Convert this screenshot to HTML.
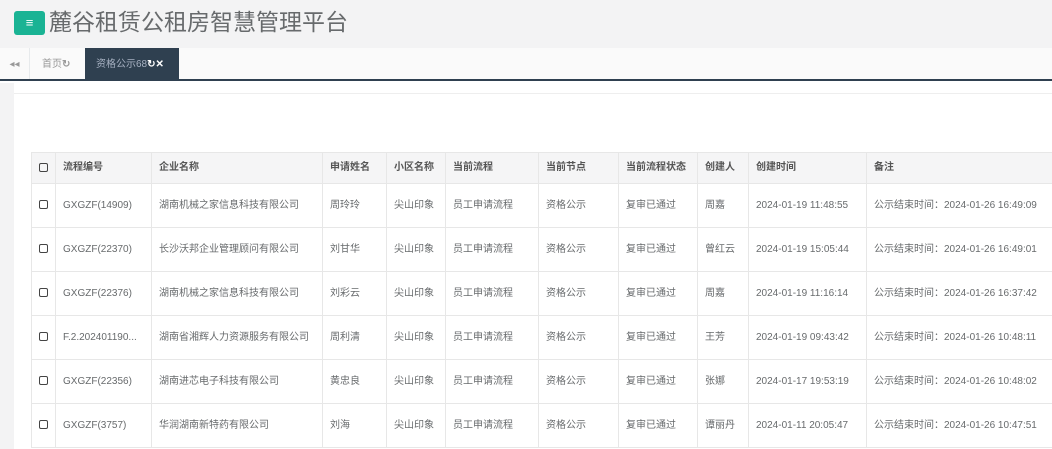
<!DOCTYPE html>
<html><head><meta charset="utf-8"><style>
*{margin:0;padding:0;box-sizing:border-box}
body{width:1052px;height:449px;overflow:hidden;background:#fff;font-family:"Liberation Sans","Noto Sans CJK SC",sans-serif;position:relative}
.hdr{position:absolute;left:0;top:0;width:1052px;height:48px;background:#f3f3f4}
.btn{position:absolute;left:14px;top:11px;width:31px;height:24px;background:#1ab394;border-radius:3px;color:#fff;font-size:13px;text-align:center;line-height:24px;font-weight:bold}
.title{position:absolute;left:49px;top:5px;font-size:23px;line-height:34px;color:#676a6c}
.tabs{position:absolute;left:0;top:48px;width:1052px;height:33px;background:#fafafa;border-bottom:2px solid #2f4050}
.arr{position:absolute;left:0;top:0;width:30px;height:31px;border-right:1px solid #e7eaec;color:#999;font-size:10px;text-align:center;line-height:33px}
.t1{position:absolute;left:42px;top:0;line-height:33px;font-size:10px;color:#999}
.t2{position:absolute;left:85px;top:0;width:94px;height:31px;background:#2f4050;color:#a7b1c2;font-size:10px;line-height:33px;padding-left:11px}
.side{position:absolute;left:0;top:83px;width:14px;height:366px;background:#f3f3f4}
.line{position:absolute;left:14px;top:93px;width:1038px;border-top:1px solid #eee}
table{position:absolute;left:31px;top:152px;border-collapse:collapse;font-size:10px;color:#676a6c;width:1080px;table-layout:fixed}
td,th{border:1px solid #e7e7e7;padding:0 0 0 7px;text-align:left;white-space:nowrap;overflow:hidden;font-weight:normal;line-height:14px;vertical-align:middle}
th{height:31px;background:#f5f5f6;font-weight:bold;color:#555}
td{height:44px}
.cb{display:inline-block;width:9px;height:9px;border:1px solid #444;border-radius:2px;vertical-align:middle}
</style></head><body>
<div class="hdr"><div class="btn">≡</div><div class="title">麓谷租赁公租房智慧管理平台</div></div>
<div class="tabs"><div class="arr">◂◂</div><div class="t1">首页<b>↻</b></div><div class="t2">资格公示68<b style="color:#fff">↻✕</b></div></div>
<div class="side"></div><div class="line"></div>
<table>
<colgroup><col style="width:24px"><col style="width:96px"><col style="width:171px"><col style="width:64px"><col style="width:59px"><col style="width:93px"><col style="width:80px"><col style="width:79px"><col style="width:51px"><col style="width:118px"><col style="width:245px"></colgroup>
<tr><th><span class="cb"></span></th><th>流程编号</th><th>企业名称</th><th>申请姓名</th><th>小区名称</th><th>当前流程</th><th>当前节点</th><th>当前流程状态</th><th>创建人</th><th>创建时间</th><th>备注</th></tr>
<tr><td><span class="cb"></span></td><td>GXGZF(14909)</td><td>湖南机械之家信息科技有限公司</td><td>周玲玲</td><td>尖山印象</td><td>员工申请流程</td><td>资格公示</td><td>复审已通过</td><td>周嘉</td><td>2024-01-19 11:48:55</td><td>公示结束时间：2024-01-26 16:49:09</td></tr>
<tr><td><span class="cb"></span></td><td>GXGZF(22370)</td><td>长沙沃邦企业管理顾问有限公司</td><td>刘甘华</td><td>尖山印象</td><td>员工申请流程</td><td>资格公示</td><td>复审已通过</td><td>曾红云</td><td>2024-01-19 15:05:44</td><td>公示结束时间：2024-01-26 16:49:01</td></tr>
<tr><td><span class="cb"></span></td><td>GXGZF(22376)</td><td>湖南机械之家信息科技有限公司</td><td>刘彩云</td><td>尖山印象</td><td>员工申请流程</td><td>资格公示</td><td>复审已通过</td><td>周嘉</td><td>2024-01-19 11:16:14</td><td>公示结束时间：2024-01-26 16:37:42</td></tr>
<tr><td><span class="cb"></span></td><td>F.2.202401190...</td><td>湖南省湘辉人力资源服务有限公司</td><td>周利清</td><td>尖山印象</td><td>员工申请流程</td><td>资格公示</td><td>复审已通过</td><td>王芳</td><td>2024-01-19 09:43:42</td><td>公示结束时间：2024-01-26 10:48:11</td></tr>
<tr><td><span class="cb"></span></td><td>GXGZF(22356)</td><td>湖南进芯电子科技有限公司</td><td>黄忠良</td><td>尖山印象</td><td>员工申请流程</td><td>资格公示</td><td>复审已通过</td><td>张娜</td><td>2024-01-17 19:53:19</td><td>公示结束时间：2024-01-26 10:48:02</td></tr>
<tr><td><span class="cb"></span></td><td>GXGZF(3757)</td><td>华润湖南新特药有限公司</td><td>刘海</td><td>尖山印象</td><td>员工申请流程</td><td>资格公示</td><td>复审已通过</td><td>谭丽丹</td><td>2024-01-11 20:05:47</td><td>公示结束时间：2024-01-26 10:47:51</td></tr>
</table>
</body></html>
